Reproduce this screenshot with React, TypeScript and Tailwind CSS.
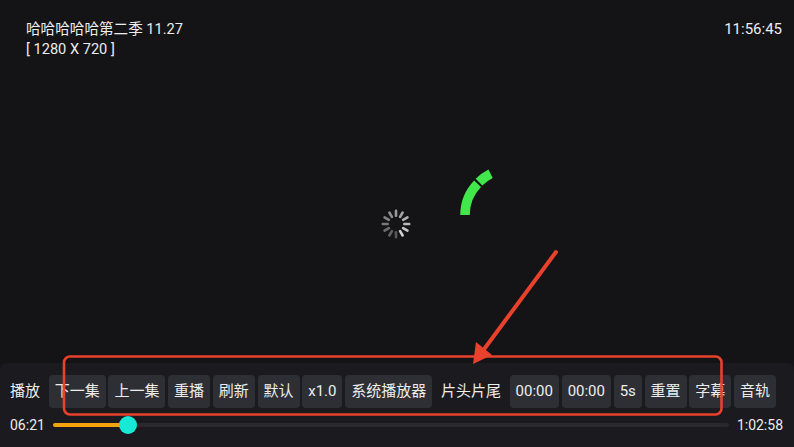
import React from "react";

const font = { fontFamily: 'Roboto, "Noto Sans CJK SC", "Noto Sans", sans-serif' };

type Ctl = { label: string; plain?: boolean };

const controls: Ctl[] = [
  { label: "播放", plain: true },
  { label: "下一集" },
  { label: "上一集" },
  { label: "重播" },
  { label: "刷新" },
  { label: "默认" },
  { label: "x1.0" },
  { label: "系统播放器" },
  { label: "片头片尾", plain: true },
  { label: "00:00" },
  { label: "00:00" },
  { label: "5s" },
  { label: "重置" },
  { label: "字幕" },
  { label: "音轨" },
];

function Spinner() {
  const spokes = Array.from({ length: 12 }, (_, i) => i);
  return (
    <svg width="32" height="32" viewBox="-16 -16 32 32">
      {spokes.map((i) => (
        <rect
          key={i}
          x="-1.3"
          y="-14.5"
          width="2.6"
          height="7.5"
          rx="1.2"
          fill="#d8d8d8"
          opacity={0.35 + ((i + 6) % 12) * 0.055}
          transform={`rotate(${i * 30})`}
        />
      ))}
    </svg>
  );
}

function GreenArc() {
  return (
    <svg width="60" height="60" viewBox="450 165 60 60" className="absolute left-[450px] top-[165px]">
      <path d="M465 215 A45 45 0 0 1 477.6 183.7" fill="none" stroke="#42e84b" strokeWidth="9.5" />
      <path d="M479 182.2 A46 46 0 0 1 490.6 173.8" fill="none" stroke="#42e84b" strokeWidth="9.5" />
    </svg>
  );
}

function Annotation() {
  return (
    <svg width="794" height="447" viewBox="0 0 794 447" className="pointer-events-none absolute inset-0">
      <rect x="64" y="356.5" width="657.5" height="58" rx="6" fill="none" stroke="#e8412c" strokeWidth="2.6" />
      <line x1="556" y1="252" x2="482" y2="352" stroke="#e8412c" strokeWidth="4" strokeLinecap="round" />
      <polygon points="473,364 476,342 492,355" fill="#e8412c" />
    </svg>
  );
}

export default function App() {
  return (
    <div className="relative flex h-[447px] w-[794px] flex-col overflow-hidden bg-[#141316] text-[#ededed]" style={font}>
      <div className="flex items-start justify-between pl-[26px] pr-[12px] pt-[19px] text-[14.6px] leading-[20px]">
        <div>
          <div>哈哈哈哈哈第二季 11.27</div>
          <div>[ 1280 X 720 ]</div>
        </div>
        <div className="text-[15px]">11:56:45</div>
      </div>

      <div className="flex-1" />

      <div className="h-[84px] rounded-t-[6px] bg-[#1b1a1e] pt-[12px]">
        <div className="flex items-center gap-[2.7px] pl-[4px]">
          {controls.map((c, i) => (
            <div
              key={i}
              className={`flex h-[33px] items-center whitespace-nowrap rounded-[4px] px-[6px] text-[15px] ${c.plain ? "" : "bg-[#2e2f35]"}`}
            >
              {c.label}
            </div>
          ))}
        </div>
        <div className="mt-[6px] flex h-[22px] items-center pl-[10px] pr-[11px] text-[14px]">
          <span className="w-[43px]">06:21</span>
          <div className="relative flex h-[4px] flex-1 items-center rounded-full bg-[#2a2a2e]">
            <div className="h-full w-[75px] rounded-full bg-[#f5a30c]" />
            <div className="absolute left-[66px] h-[18px] w-[18px] rounded-full bg-[#18e8d6]" />
          </div>
          <span className="ml-[8px]">1:02:58</span>
        </div>
      </div>

      <div className="pointer-events-none absolute inset-0 flex items-center justify-center pb-[2px]">
        <div className="mr-[2px] mt-[2px]">
          <Spinner />
        </div>
      </div>
      <GreenArc />
      <Annotation />
    </div>
  );
}
